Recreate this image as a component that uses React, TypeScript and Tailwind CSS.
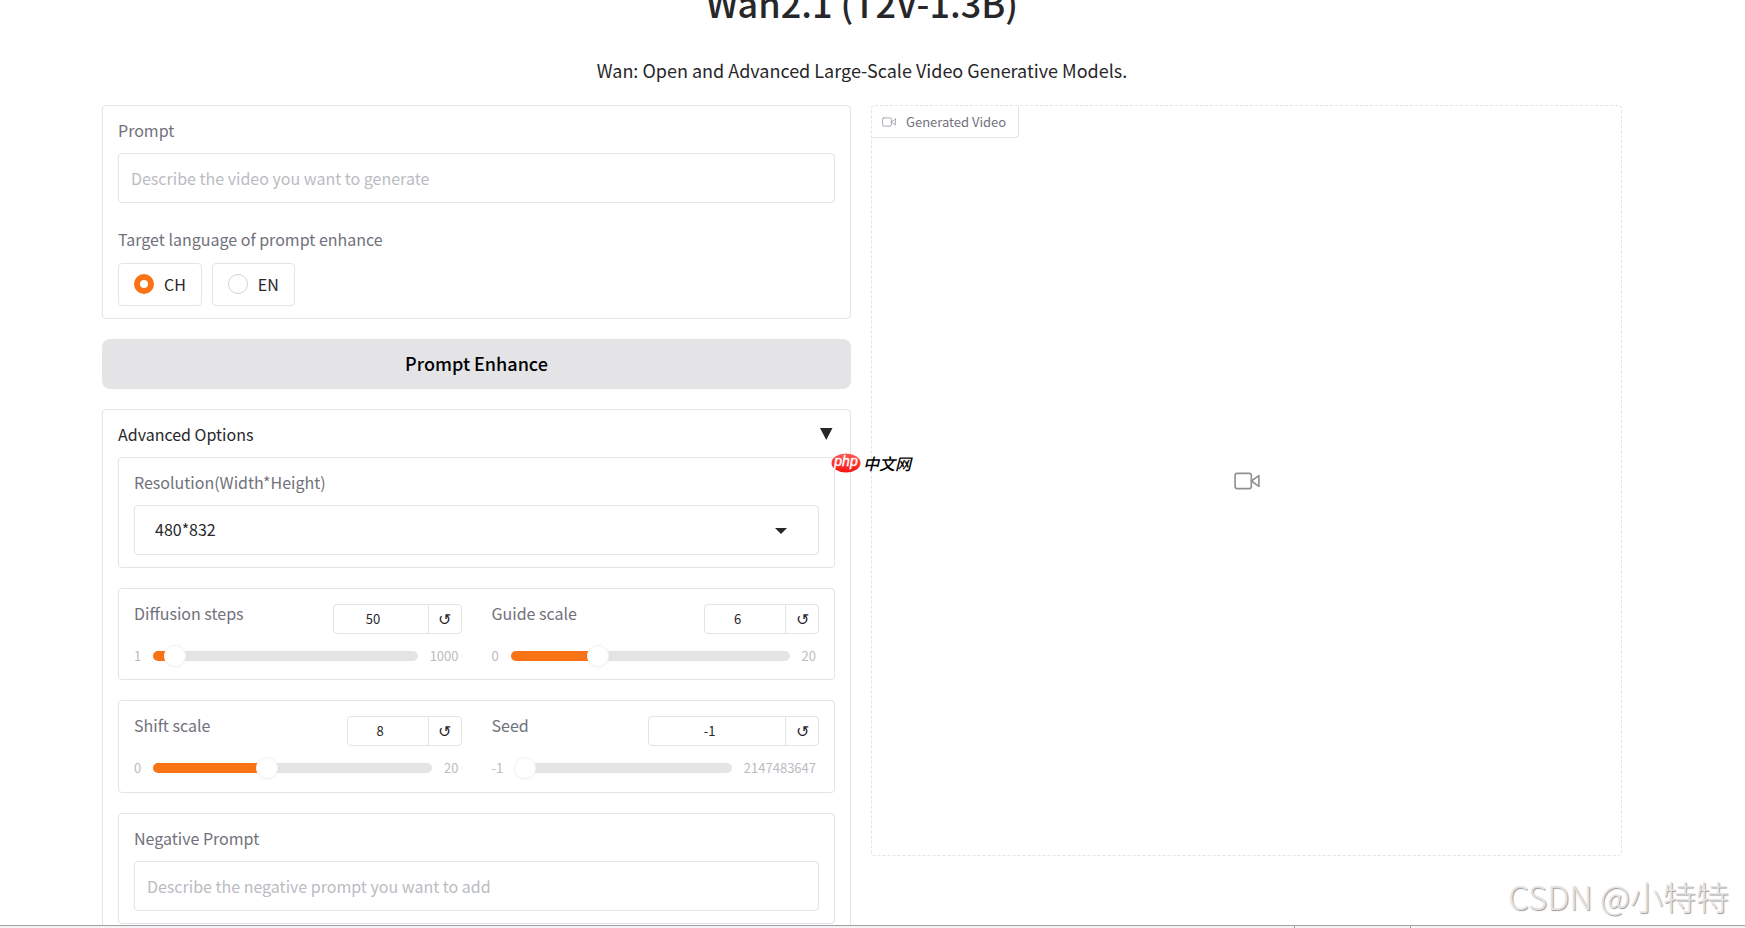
import { useState } from 'react';
import type { ReactNode } from 'react';

function VideoIcon({ className }: { className?: string }) {
  return (
    <svg
      viewBox="0 0 24 24"
      fill="none"
      stroke="currentColor"
      strokeWidth="1.5"
      strokeLinecap="round"
      strokeLinejoin="round"
      className={className}
      aria-hidden="true"
    >
      <polygon points="23 7 16 12 23 17 23 7" />
      <rect x="1" y="5" width="15" height="14" rx="2" ry="2" />
    </svg>
  );
}

function Panel({ className = '', children }: { className?: string; children: ReactNode }) {
  return <div className={`rounded border border-zinc-200 px-[15px] pt-3.5 ${className}`}>{children}</div>;
}

function TextField({ id, label, placeholder }: { id: string; label: string; placeholder: string }) {
  return (
    <div>
      <label htmlFor={id} className="block leading-5 text-zinc-500">
        {label}
      </label>
      <input
        id={id}
        type="text"
        placeholder={placeholder}
        className="mt-[13px] block h-[50px] w-full rounded border border-zinc-200 px-3 outline-none placeholder:text-[#bbbbc2]"
      />
    </div>
  );
}

type SliderProps = {
  id: string;
  label: string;
  min: number;
  max: number;
  initial: number;
  boxWidth: string;
};

function Slider({ id, label, min, max, initial, boxWidth }: SliderProps) {
  const [value, setValue] = useState(initial);
  const percent = ((value - min) / (max - min)) * 100;

  return (
    <div className="min-w-0 flex-1">
      <div className="flex items-start justify-between">
        <label htmlFor={id} className="leading-5 text-zinc-500">
          {label}
        </label>
        <div className={`mt-px flex h-[30px] overflow-hidden rounded border border-zinc-200 ${boxWidth}`}>
          <input
            id={id}
            type="number"
            min={min}
            max={max}
            value={value}
            onChange={(e) => setValue(Number(e.target.value))}
            className="min-w-0 flex-1 text-center text-[13px] outline-none"
          />
          <button
            type="button"
            aria-label={`Reset ${label}`}
            onClick={() => setValue(initial)}
            className="w-[33px] border-l border-zinc-200 pb-0.5 text-base leading-6"
          >
            ↺
          </button>
        </div>
      </div>
      <div className="mt-3 flex h-5 items-center gap-3 pr-[3px] text-[13px] text-[#bbbbc2]">
        <span>{min}</span>
        <input
          type="range"
          aria-label={label}
          min={min}
          max={max}
          value={value}
          onChange={(e) => setValue(Number(e.target.value))}
          style={{ backgroundImage: `linear-gradient(to right, #f97316 ${percent}%, transparent ${percent}%)` }}
          className="h-2.5 min-w-0 flex-1 appearance-none rounded-full bg-zinc-200 [&::-webkit-slider-thumb]:size-5 [&::-webkit-slider-thumb]:appearance-none [&::-webkit-slider-thumb]:rounded-full [&::-webkit-slider-thumb]:bg-white [&::-webkit-slider-thumb]:shadow-[0_0_0_1px_#f4f4f5,0_1px_4px_rgba(0,0,0,0.06)]"
        />
        <span>{max}</span>
      </div>
    </div>
  );
}

function LanguageOption({ value, checked, onSelect }: { value: string; checked: boolean; onSelect: () => void }) {
  return (
    <label className="flex h-[43px] items-center gap-2.5 rounded border border-zinc-200 px-[15px] pb-0.5">
      <input
        type="radio"
        name="language"
        checked={checked}
        onChange={onSelect}
        className="size-5 appearance-none rounded-full border border-zinc-300 checked:border-[6px] checked:border-[#f97316]"
      />
      {value}
    </label>
  );
}

function PhpBadge() {
  return (
    <div className="absolute top-[453px] left-[831px] flex items-center">
      <svg width="30" height="20" viewBox="0 0 30 20" aria-hidden="true">
        <defs>
          <linearGradient id="php-red" x1="0" y1="0" x2="0" y2="1">
            <stop offset="0" stopColor="#ff5a50" />
            <stop offset="1" stopColor="#f51414" />
          </linearGradient>
        </defs>
        <ellipse cx="15" cy="10" rx="14.5" ry="9.5" fill="url(#php-red)" />
        <text
          x="15"
          y="13"
          textAnchor="middle"
          fill="#fff"
          stroke="#fff"
          strokeWidth="0.4"
          fontSize="14"
          fontStyle="italic"
          fontFamily="Liberation Sans, sans-serif"
        >
          php
        </text>
      </svg>
      <span className="ml-0.5 text-base leading-[18px] font-medium text-black italic">中文网</span>
    </div>
  );
}

export default function App() {
  const [language, setLanguage] = useState('CH');
  const [open, setOpen] = useState(true);

  return (
    <div className="relative flex h-screen flex-col overflow-hidden bg-white font-['Noto_Sans_CJK_SC',sans-serif] text-base text-zinc-800">
      <main className="min-h-0 flex-1 overflow-hidden pr-[123px] pl-[102px]">
        <div className="-mt-[22px]">
          <h1 className="text-center text-4xl leading-[48px] font-medium">Wan2.1 (T2V-1.3B)</h1>
          <p className="mt-[30px] text-center text-lg leading-7">
            Wan: Open and Advanced Large-Scale Video Generative Models.
          </p>

          <div className="mt-[21px] flex items-start gap-5">
            {/* Inputs */}
            <div className="flex min-w-0 flex-1 flex-col gap-5">
              <Panel className="pb-3">
                <TextField id="prompt" label="Prompt" placeholder="Describe the video you want to generate" />
                <fieldset className="mt-[26px]">
                  <legend className="leading-5 text-zinc-500">Target language of prompt enhance</legend>
                  <div className="mt-3.5 flex gap-2.5">
                    {['CH', 'EN'].map((lang) => (
                      <LanguageOption
                        key={lang}
                        value={lang}
                        checked={language === lang}
                        onSelect={() => setLanguage(lang)}
                      />
                    ))}
                  </div>
                </fieldset>
              </Panel>

              <button type="button" className="h-[50px] rounded-lg bg-zinc-200 pb-0.5 text-lg font-medium text-black">
                Prompt Enhance
              </button>

              <Panel className="pb-[15px]">
                <button
                  type="button"
                  aria-expanded={open}
                  onClick={() => setOpen(!open)}
                  className="flex w-full items-center justify-between leading-5"
                >
                  Advanced Options
                  <svg width="18" height="12" viewBox="0 0 18 12" className={open ? '' : 'rotate-90'} aria-hidden="true">
                    <path d="M3 0h12.500L9.250 12z" fill="currentColor" />
                  </svg>
                </button>

                {open && (
                  <div className="mt-[13px] flex flex-col gap-5">
                    <Panel className="pb-3">
                      <label htmlFor="resolution" className="block leading-5 text-zinc-500">
                        Resolution(Width*Height)
                      </label>
                      <div className="relative mt-[13px]">
                        <select
                          id="resolution"
                          className="block h-[50px] w-full appearance-none rounded border border-zinc-200 pb-0.5 pl-5 outline-none"
                        >
                          <option>480*832</option>
                          <option>832*480</option>
                        </select>
                        <svg
                          width="12"
                          height="6"
                          viewBox="0 0 12 6"
                          className="pointer-events-none absolute top-[23px] right-8"
                          aria-hidden="true"
                        >
                          <path d="M0 0h12L6 6z" fill="currentColor" />
                        </svg>
                      </div>
                    </Panel>

                    <Panel className="flex gap-[30px] pb-[13px]">
                      <Slider id="steps" label="Diffusion steps" min={1} max={1000} initial={50} boxWidth="w-[129px]" />
                      <Slider id="guide" label="Guide scale" min={0} max={20} initial={6} boxWidth="w-[115px]" />
                    </Panel>

                    <Panel className="flex gap-[30px] pb-3.5">
                      <Slider id="shift" label="Shift scale" min={0} max={20} initial={8} boxWidth="w-[115px]" />
                      <Slider id="seed" label="Seed" min={-1} max={2147483647} initial={-1} boxWidth="w-[171px]" />
                    </Panel>

                    <Panel className="pb-3">
                      <TextField
                        id="negative"
                        label="Negative Prompt"
                        placeholder="Describe the negative prompt you want to add"
                      />
                    </Panel>
                  </div>
                )}
              </Panel>
            </div>

            {/* Output */}
            <div className="flex aspect-square min-w-0 flex-1 flex-col rounded border border-dashed border-zinc-200 text-zinc-500">
              <div className="flex h-8 items-center gap-2.5 self-start rounded-br border-r border-b border-zinc-200 pr-3 pl-2.5 text-[13px]">
                <VideoIcon className="size-3.5 text-zinc-400" />
                Generated Video
              </div>
              <div className="-mt-8 flex flex-1 items-center justify-center">
                <VideoIcon className="size-[26px] text-[#8f8f94]" />
              </div>
            </div>
          </div>
        </div>
      </main>

      {/* Top edge of the bar below the page */}
      <footer className="flex h-[3px] shrink-0 border-t border-zinc-400 bg-zinc-100">
        <div className="w-[1295px] border-r border-zinc-400" />
        <div className="w-[116px] border-r border-zinc-400" />
      </footer>

      <PhpBadge />
      <div className="absolute right-4 bottom-3 text-[33px] leading-10 font-light text-[#e4e4e4] [text-shadow:1px_1px_1px_#9a9a9a]">
        CSDN @小特特
      </div>
    </div>
  );
}
